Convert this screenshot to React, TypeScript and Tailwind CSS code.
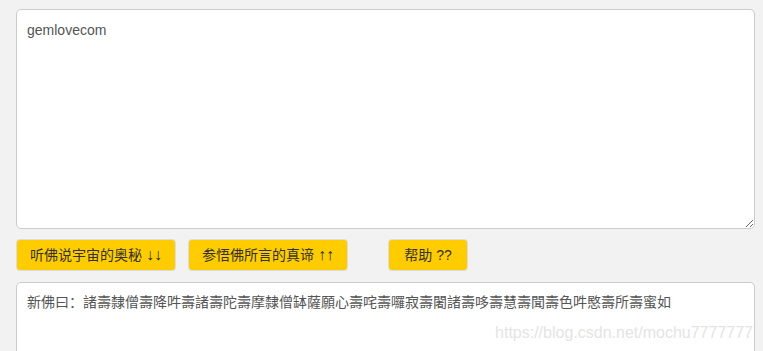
import React from 'react';

const App = () => {
    const [plain, setPlain] = React.useState('gemlovecom');
    const [cipher, setCipher] = React.useState('新佛曰：諸壽隸僧壽降吽壽諸壽陀壽摩隸僧缽薩願心壽咤壽囉寂壽闍諸壽哆壽慧壽聞壽色吽愍壽所壽蜜如');

    return (
        <div className="relative w-full h-[351px] bg-[#f2f2f2] overflow-hidden px-4 pt-[9px]" style={{ fontFamily: '"Liberation Sans", "Noto Sans CJK SC", sans-serif' }}>
            <textarea
                value={plain}
                onChange={(e) => setPlain(e.target.value)}
                className="block w-[739px] h-[220px] bg-white border border-[#cccccc] rounded-[5px] px-[10px] py-[10px] text-[14px] leading-[20px] text-[#555555] outline-none resize-y"
            />

            <div className="flex items-center mt-[10px] mb-[11px]">
                <button className="w-[160px] h-[32px] bg-[#ffcc00] border border-[#dddddd] rounded-[4px] text-[14px] text-[#333333]">
                    听佛说宇宙的奥秘 <span className="text-[16px]">↓↓</span>
                </button>
                <button className="w-[160px] h-[32px] ml-[12px] bg-[#ffcc00] border border-[#dddddd] rounded-[4px] text-[14px] text-[#333333]">
                    参悟佛所言的真谛 <span className="text-[16px]">↑↑</span>
                </button>
                <button className="w-[80px] h-[32px] ml-[40px] bg-[#ffcc00] border border-[#dddddd] rounded-[4px] text-[14px] text-[#333333]">
                    帮助 ??
                </button>
            </div>

            <textarea
                value={cipher}
                onChange={(e) => setCipher(e.target.value)}
                className="block w-[739px] h-[120px] bg-white border border-[#cccccc] rounded-[5px] px-[10px] py-[9px] text-[14px] leading-[20px] text-[#555555] outline-none resize-y"
            />

            <div className="absolute right-[10px] top-[321px] text-[16px] text-[#e4e4e4] pointer-events-none" style={{ fontFamily: '"Liberation Sans", Arial, sans-serif' }}>
                https://blog.csdn.net/mochu7777777
            </div>
        </div>
    );
};

export default App;
